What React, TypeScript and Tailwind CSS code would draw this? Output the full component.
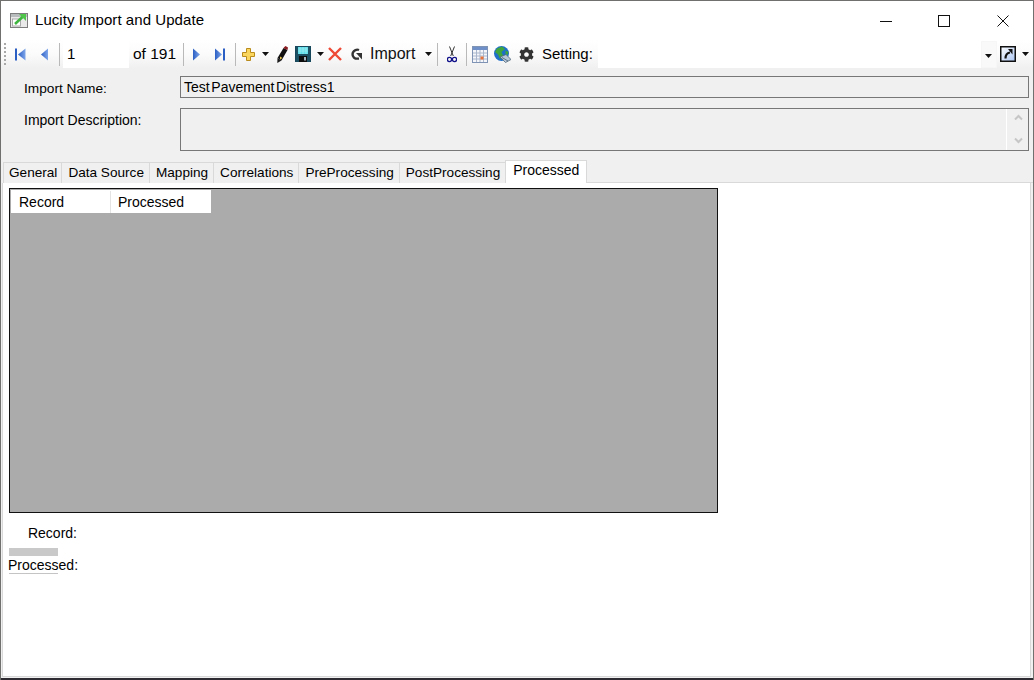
import { FaCog } from 'react-icons/fa';

const tabs = ['General', 'Data Source', 'Mapping', 'Correlations', 'PreProcessing', 'PostProcessing'];

function Caret({ className = '' }: { className?: string }) {
  return (
    <svg width="7" height="4" viewBox="0 0 7 4" className={className}>
      <polygon points="0,0 7,0 3.5,4" fill="#111" />
    </svg>
  );
}

function Sep({ className = '' }: { className?: string }) {
  return <div className={`h-[23px] w-px bg-[#b9b9b9] ${className}`} />;
}

function Nav({ dir, bar, className = '' }: { dir: 'l' | 'r'; bar?: boolean; className?: string }) {
  const tri = dir === 'l' ? '8,0.5 8,12.5 1,6.5' : '1,0.5 1,12.5 8,6.5';
  return (
    <svg width={bar ? 11 : 9} height="13" viewBox={bar ? '0 0 11 13' : '0 0 9 13'} className={className}>
      <defs>
        <linearGradient id={`nav${dir}${bar ? 'b' : ''}`} x1="0" y1="0" x2="1" y2="0">
          <stop offset="0" stopColor="#2c5fc4" />
          <stop offset="1" stopColor="#7fa6ea" />
        </linearGradient>
      </defs>
      {bar && dir === 'l' && <rect x="0" y="0.5" width="2" height="12" fill="#2c5fc4" />}
      <polygon
        points={bar && dir === 'l' ? '10.5,0.5 10.5,12.5 3,6.5' : tri}
        fill={`url(#nav${dir}${bar ? 'b' : ''})`}
      />
      {bar && dir === 'r' && <rect x="9" y="0.5" width="2" height="12" fill="#2c5fc4" />}
    </svg>
  );
}

function AppIcon() {
  return (
    <svg width="18" height="17" viewBox="0 0 18 17" className="shrink-0">
      <rect x="0.5" y="1.5" width="17" height="14" fill="#e9e9e9" stroke="#7d7d7d" />
      <rect x="1" y="2" width="16" height="3" fill="#b9bcbc" />
      <rect x="2.5" y="7" width="8" height="7" fill="#fff" stroke="#a9a9a9" />
      <path d="M5 12 L13 4.5" stroke="#3fb53f" strokeWidth="2.6" />
      <polygon points="9,2 16,2 16,9" fill="#4fc64a" />
    </svg>
  );
}

function PlusIcon({ className = '' }: { className?: string }) {
  return (
    <svg width="13" height="13" viewBox="0 0 13 13" className={className}>
      <polygon
        points="4.5,0.5 8.5,0.5 8.5,4.5 12.5,4.5 12.5,8.5 8.5,8.5 8.5,12.5 4.5,12.5 4.5,8.5 0.5,8.5 0.5,4.5 4.5,4.5"
        fill="#fbd65e"
        stroke="#b98a1c"
      />
    </svg>
  );
}

function PencilIcon({ className = '' }: { className?: string }) {
  return (
    <svg width="11" height="17" viewBox="0 0 11 17" className={className}>
      <polygon points="6.5,2 10.5,4 4.5,14.5 0.5,12" fill="#111" />
      <polygon points="6.8,1.5 8.5,0 11,1.5 10.5,4 6.5,2.2" fill="#8a1c22" />
      <polygon points="3,10.5 5.5,12 3,13.5" fill="#e8c34a" />
      <polygon points="0.5,12 4.5,14.5 0.3,17" fill="#1a1a1a" />
    </svg>
  );
}

function SaveIcon({ className = '' }: { className?: string }) {
  return (
    <svg width="16" height="16" viewBox="0 0 16 16" className={className}>
      <rect x="0" y="0" width="16" height="16" fill="#16475a" />
      <rect x="1" y="0.5" width="14" height="15" fill="#1d4f63" />
      <rect x="3" y="1" width="10" height="7" fill="#5cdde8" />
      <path d="M3 3h10M3 5h10M5 1v7M8 1v7M11 1v7" stroke="#b4f0f4" strokeWidth="0.6" />
      <rect x="4" y="10" width="8" height="6" fill="#0d0d0d" />
      <rect x="9" y="11" width="2" height="3.5" fill="#9fb4bc" />
    </svg>
  );
}

function CloseIcon({ className = '' }: { className?: string }) {
  return (
    <svg width="14" height="14" viewBox="0 0 14 14" className={className}>
      <path d="M1 1 L13 13 M13 1 L1 13" stroke="#ee4a35" strokeWidth="2.4" />
    </svg>
  );
}

function UndoIcon({ className = '' }: { className?: string }) {
  return (
    <svg width="12" height="12" viewBox="0 0 12 12" className={className}>
      <path d="M9 2 A4 4 0 1 0 5.5 10.6 L9 10.6" fill="none" stroke="#333" strokeWidth="2.4" />
      <polygon points="6,5 12,5 12,11.5" fill="#333" />
    </svg>
  );
}

function ScissorsIcon({ className = '' }: { className?: string }) {
  return (
    <svg width="10" height="17" viewBox="0 0 10 17" className={className}>
      <path d="M2.5 0.5 L6.3 10 M7.5 0.5 L3.7 10" stroke="#333" strokeWidth="1" fill="none" />
      <circle cx="2.5" cy="13.5" r="2.1" fill="none" stroke="#12128a" strokeWidth="1.3" />
      <circle cx="7.5" cy="13.5" r="2.1" fill="none" stroke="#12128a" strokeWidth="1.3" />
    </svg>
  );
}

function CalendarIcon({ className = '' }: { className?: string }) {
  return (
    <svg width="16" height="17" viewBox="0 0 16 17" className={className}>
      <rect x="0.5" y="0.5" width="15" height="16" fill="#f4f6fa" stroke="#7f93b5" />
      <rect x="1" y="1" width="14" height="3" fill="#6f8fc8" />
      <path d="M1 7h14M1 10h14M1 13h14M4.5 4v12M8 4v12M11.5 4v12" stroke="#a9b6cc" strokeWidth="1" />
      <rect x="8.5" y="10.5" width="3" height="3" fill="#e8743c" />
    </svg>
  );
}

function GlobeIcon({ className = '' }: { className?: string }) {
  return (
    <svg width="17" height="17" viewBox="0 0 17 17" className={className}>
      <circle cx="7.5" cy="7.5" r="7.5" fill="#1f6fc9" />
      <path d="M3 2.5 L8 0.5 L11 3 L7.5 6 L9 9.5 L6 13 L4 8.5 L1 6 Z" fill="#3fa53c" />
      <path d="M11.5 4.5 L14.5 6 L13.5 9 L11.5 8 Z" fill="#3fa53c" />
      <path d="M6 11 L12 8.5 L17 13.5 L11.5 16.5 Z" fill="#b8c6d6" stroke="#4f6679" strokeWidth="0.8" />
      <path d="M8 11.5 L14 15" stroke="#5d7488" strokeWidth="1" />
    </svg>
  );
}

function ShortcutIcon({ className = '' }: { className?: string }) {
  return (
    <svg width="16" height="16" viewBox="0 0 16 16" className={className}>
      <defs>
        <linearGradient id="shortcutBg" x1="0" y1="0" x2="1" y2="1">
          <stop offset="0" stopColor="#ffffff" />
          <stop offset="1" stopColor="#a9c4f2" />
        </linearGradient>
      </defs>
      <rect x="0.75" y="0.75" width="14.5" height="14.5" fill="url(#shortcutBg)" stroke="#111" strokeWidth="1.5" />
      <path d="M5.5 12.5 C5.5 8.5 7 7 10 6.5" fill="none" stroke="#111" strokeWidth="2.2" />
      <polygon points="8,3 12.5,3 12.5,8.5" fill="#111" />
    </svg>
  );
}

export default function App() {
  return (
    <div className="flex h-[680px] w-[1034px] flex-col overflow-hidden border-t border-r border-l border-[#70706f] bg-[#f0f0f0] font-['Liberation_Sans',Arial,sans-serif] text-[14px] text-black">
      {/* title bar */}
      <div className="flex h-[39px] items-center bg-white pl-[9px]">
        <AppIcon />
        <span className="ml-[7px] text-[15px] tracking-[0.06px]">Lucity Import and Update</span>
        <div className="ml-auto flex items-center pr-[24px]">
          <svg width="12" height="12" viewBox="0 0 12 12">
            <path d="M0 6.5h12" stroke="#111" />
          </svg>
          <svg width="12" height="12" viewBox="0 0 12 12" className="ml-[46px]">
            <rect x="0.5" y="0.5" width="11" height="11" fill="none" stroke="#111" />
          </svg>
          <svg width="12" height="12" viewBox="0 0 12 12" className="ml-[47px]">
            <path d="M0.5 0.5 L11.5 11.5 M11.5 0.5 L0.5 11.5" stroke="#111" />
          </svg>
        </div>
      </div>

      {/* toolbar */}
      <div className="flex h-[28px] items-center bg-linear-to-b from-white via-[#fbfbfb] to-[#f0f0f0]">
        <div className="ml-[3px] h-[22px] w-[2px] border-l-2 border-dotted border-[#a8a8a8]" />
        <Nav dir="l" bar className="ml-[9px]" />
        <Nav dir="l" className="ml-[14px]" />
        <Sep className="ml-[10px]" />
        <div className="ml-[3px] flex h-[27px] w-[66px] items-center bg-white pl-[4px] text-[15px]">1</div>
        <span className="ml-[4px] w-[42px] text-[15.5px] whitespace-nowrap">of 191</span>
        <Sep className="ml-[8px]" />
        <Nav dir="r" className="ml-[8px]" />
        <Nav dir="r" bar className="ml-[13px]" />
        <Sep className="ml-[10px]" />
        <PlusIcon className="ml-[6px]" />
        <Caret className="ml-[7px]" />
        <PencilIcon className="ml-[8px]" />
        <SaveIcon className="ml-[7px]" />
        <Caret className="ml-[6px]" />
        <CloseIcon className="ml-[4px]" />
        <UndoIcon className="ml-[8px]" />
        <span className="ml-[8px] w-[45px] text-[16px] text-[#111]">Import</span>
        <Caret className="ml-[10px]" />
        <Sep className="ml-[5px]" />
        <ScissorsIcon className="ml-[9px]" />
        <Sep className="ml-[9px]" />
        <CalendarIcon className="ml-[5px]" />
        <GlobeIcon className="ml-[6px]" />
        <FaCog className="ml-[8px] text-[15px] text-[#333]" />
        <span className="ml-[8px] w-[51px] text-[15px] whitespace-nowrap">Setting:</span>
        <div className="ml-[5px] h-[27px] w-[383px] self-end bg-white" />
        <div className="flex h-[27px] w-[16px] items-center self-end border border-[#f6f6f6] bg-[#f9f9f9] pl-[3px]">
          <Caret className="mt-[2px]" />
        </div>
        <ShortcutIcon className="ml-[3px]" />
        <Caret className="ml-[6px]" />
      </div>

      {/* import fields */}
      <div className="flex h-[92px] flex-col pt-[8px] pr-[4px] pl-[23px]">
        <div className="flex h-[22px] items-center">
          <span className="w-[156px] pt-[5px] text-[13.7px]">Import Name:</span>
          <div className="flex h-[22px] flex-1 items-center border border-[#777] pl-[3px] [word-spacing:-2.2px]">
            Test Pavement Distress1
          </div>
        </div>
        <div className="mt-[10px] flex h-[43px]">
          <span className="w-[156px] pt-[2px]">Import Description:</span>
          <div className="flex flex-1 justify-end border border-[#777]">
            <div className="flex w-[22px] flex-col items-center justify-between border-l border-white py-[5px] pl-[1px]">
              <svg width="9" height="7" viewBox="0 0 9 7">
                <path d="M1 5.5 L4.5 2 L8 5.5" fill="none" stroke="#c6c6c6" strokeWidth="2" />
              </svg>
              <svg width="9" height="7" viewBox="0 0 9 7" className="mb-[1px]">
                <path d="M1 1.5 L4.5 5 L8 1.5" fill="none" stroke="#c6c6c6" strokeWidth="2" />
              </svg>
            </div>
          </div>
        </div>
      </div>

      {/* tabs */}
      <div className="flex h-[23px] items-end pl-[2px]">
        {tabs.map((t) => (
          <div
            key={t}
            className="flex h-[21px] items-center border-t border-r border-[#d9d9d9] bg-[#f0f0f0] pr-[5px] pl-[6px] text-[13.6px] first:border-l first:pr-[4px] first:pl-[5px]"
          >
            {t}
          </div>
        ))}
        <div className="-ml-px flex h-[23px] items-center border-x border-t border-[#d9d9d9] bg-white pr-[7px] pb-[3px] pl-[7px]">
          Processed
        </div>
        <div className="h-px flex-1 self-end bg-[#d9d9d9]" />
      </div>

      {/* processed tab */}
      <div className="mr-[2px] mb-[1px] ml-px flex flex-1 flex-col border-x border-b border-[#d9d9d9] bg-white pt-[5px] pl-[6px]">
        <div className="h-[325px] w-[709px] border border-[#111] bg-[#ababab] pt-px pl-px">
          <div className="flex h-[23px] w-[200px] items-center bg-white pt-px">
            <div className="flex h-full w-[100px] items-center border-r border-[#e3e3e3] pl-[8px]">Record</div>
            <div className="pl-[7px]">Processed</div>
          </div>
        </div>
        <div className="mt-[10px] w-[68px] text-right">Record:</div>
        <div className="mt-[4px] h-[8px] w-[49px] bg-[#c9c9c9]" />
        <div className="mt-px -ml-px w-[70px] text-right leading-[16px]">Processed:</div>
        <div className="h-px w-[49px] bg-[#c4c4c4]" />
      </div>
      <div className="h-[2px] bg-[#2f2b33]" />
    </div>
  );
}
